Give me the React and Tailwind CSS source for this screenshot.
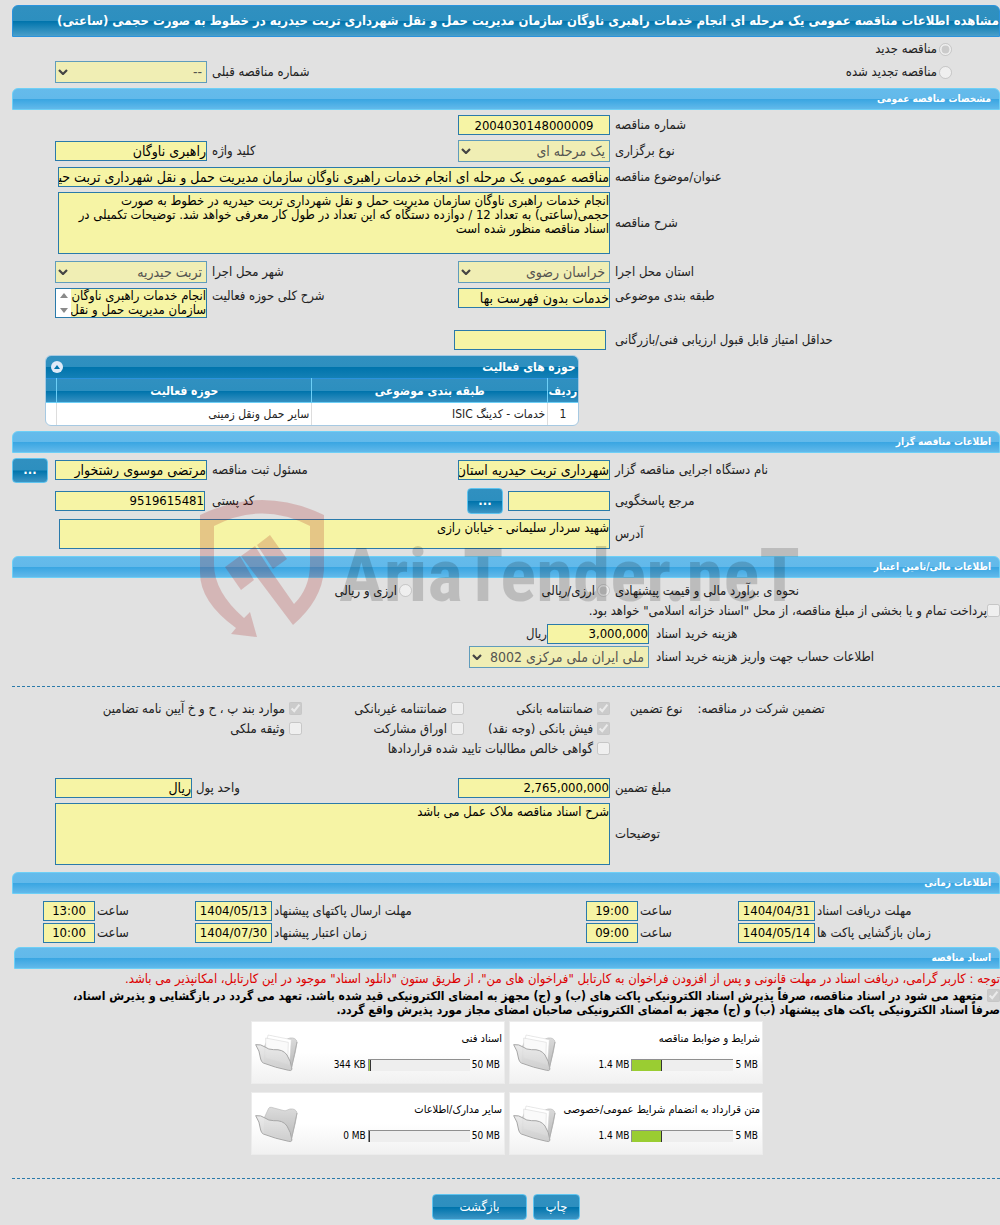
const title =
  "مناقصه عمومی یک مرحله ای انجام خدمات راهبری ناوگان سازمان مدیریت حمل و نقل شهرداری تربت حیدریه در خطوط به صورت حجمی (ساعتی)";

const description =
  "انجام خدمات راهبری ناوگان سازمان مدیریت حمل و نقل شهرداری تربت حیدریه در خطوط به صورت\nحجمی(ساعتی) به تعداد 12 / دوازده دستگاه که این تعداد در طول کار معرفی خواهد شد. توضیحات تکمیلی در\nاسناد مناقصه منظور شده است";

const guarantees = [
  { id: "g1", label: "ضمانتنامه بانکی", checked: true },
  { id: "g2", label: "ضمانتنامه غیربانکی", checked: false },
  { id: "g3", label: "موارد بند پ ، ح و خ آیین نامه تضامین", checked: true },
  { id: "g4", label: "فیش بانکی (وجه نقد)", checked: true },
  { id: "g5", label: "اوراق مشارکت", checked: false },
  { id: "g6", label: "وثیقه ملکی", checked: false },
  { id: "g7", label: "گواهی خالص مطالبات تایید شده قراردادها", checked: false, wide: true },
];

const times = [
  [
    { id: "t1", label: "مهلت دریافت اسناد", date: "1404/04/31", hour: "19:00" },
    { id: "t2", label: "مهلت ارسال پاکتهای پیشنهاد", date: "1404/05/13", hour: "13:00" },
  ],
  [
    { id: "t3", label: "زمان بازگشایی پاکت ها", date: "1404/05/14", hour: "09:00" },
    { id: "t4", label: "زمان اعتبار پیشنهاد", date: "1404/07/30", hour: "10:00" },
  ],
];

const documents = [
  { title: "شرایط و ضوابط مناقصه", used: "1.4 MB", max: "5 MB", percent: 29, papers: true },
  { title: "اسناد فنی", used: "344 KB", max: "50 MB", percent: 2, papers: true },
  { title: "متن قرارداد به انضمام شرایط عمومی/خصوصی", used: "1.4 MB", max: "5 MB", percent: 29, papers: true },
  { title: "سایر مدارک/اطلاعات", used: "0 MB", max: "50 MB", percent: 0, papers: false },
];

const Section = ({ children, className = "mt-[7px]" }) => (
  <h2
    className={`flex h-[22px] items-center rounded-t-md border border-[#6dcff6] bg-[linear-gradient(#65bbeb_0%,#62b9ea_48%,#3aa6e2_52%,#62b9ea_100%)] px-2 text-[10px] font-bold text-white ${className}`}
  >
    {children}
  </h2>
);

const Row = ({ children, className = "items-center" }) => (
  <div className={`grid grid-cols-[390fr_152fr_251fr_152fr_43fr] ${className}`}>{children}</div>
);

const Label = ({ htmlFor, children, className = "pl-[5px]" }) => (
  <label htmlFor={htmlFor} className={`block text-left whitespace-nowrap ${className}`}>
    {children}
  </label>
);

const Input = ({ id, value, className = "w-full text-[14px]" }) => (
  <input
    id={id}
    type="text"
    readOnly
    defaultValue={value}
    className={`block h-5 min-w-0 border border-[#2a7aaa] bg-[#f6f4a5] leading-[18px] text-black outline-none ${className}`}
  />
);

const Area = ({ id, value, className }) => (
  <textarea
    id={id}
    readOnly
    defaultValue={value}
    className={`block w-full resize-none overflow-hidden border border-[#2a7aaa] bg-[#f6f4a5] pt-px leading-[14px] text-black outline-none ${className}`}
  />
);

const Select = ({ id, value, className = "w-full" }) => (
  <div className={`relative ${className}`}>
    <select
      id={id}
      disabled
      className="block h-[22px] w-full appearance-none border border-[#609cbb] bg-[#f0eeb4] pr-1 pl-4 text-[14px] text-[#545450]"
    >
      <option>{value}</option>
    </select>
    <svg viewBox="0 0 10 6" className="pointer-events-none absolute top-2 left-[3px] h-1.5 w-2.5">
      <path d="M1 1l4 4 4-4" fill="none" stroke="#444" strokeWidth="2.2" />
    </svg>
  </div>
);

const Choice = ({ type = "checkbox", id, name, checked, label, gap = "mr-1", className = "" }) => (
  <div className={`flex items-center ${className}`}>
    <input id={id} name={name} type={type} defaultChecked={checked} disabled className="m-0 h-[13px] w-[13px] shrink-0" />
    <label htmlFor={id} className={`whitespace-nowrap ${gap}`}>
      {label}
    </label>
  </div>
);

const Button = ({ children, className, label }) => (
  <button
    type="button"
    aria-label={label}
    className={`rounded border border-[#5fc4ef] bg-[linear-gradient(#3090c0_0%,#2d8fbf_48%,#0074ac_52%,#3d95c4_100%)] text-white ${className}`}
  >
    {children}
  </button>
);

const FolderIcon = ({ papers }) => (
  <svg viewBox="10 45 135 120" className="h-10 w-[45px]" aria-hidden="true">
    <defs>
      <linearGradient id="folderBack" x1="0" y1="0" x2="0" y2="1">
        <stop offset="0" stopColor="#dcdcdc" />
        <stop offset="1" stopColor="#b8b8b8" />
      </linearGradient>
      <linearGradient id="folderFront" x1="0" y1="0" x2="0" y2="1">
        <stop offset="0" stopColor="#e9e9e9" />
        <stop offset="1" stopColor="#cfcfcf" />
      </linearGradient>
    </defs>
    <path
      d="M42 84L54 58q2-4 8-3l38 10q6 1 10-2l8-3q18-2 21 12l-5 30-12 48q-2 6-8 4L40 132z"
      fill="url(#folderBack)"
      stroke="#b9b9b9"
      strokeWidth="2"
    />
    {papers && (
      <g stroke="#d2d2d2" strokeWidth="1.5">
        <path d="M52 51l70 14-6 76-74-30z" fill="#fff" />
        <path d="M45 60l68 13-2 66-66-20z" fill="#fafafa" />
      </g>
    )}
    <path
      d="M15 80q16-2 28 7 10 8 26 8 28-2 40 16 12 18 15 43-2 5-10 3-40-8-76-22-6-3-8-12-3-26-15-43z"
      fill="url(#folderFront)"
      fillOpacity="0.92"
      stroke="#a6a6a6"
      strokeWidth="3"
    />
    <path d="M122 152l9-42 8-38" fill="none" stroke="#b0b0b0" strokeWidth="3" />
  </svg>
);

const Watermark = () => (
  <svg
    viewBox="0 0 620 140"
    className="pointer-events-none absolute top-[498px] left-[20%] z-10 w-[62%]"
    direction="ltr"
    aria-hidden="true"
  >
    <g fill="#a00000" fillOpacity="0.19">
      <path d="M0 17Q62-13 124 17V72Q122 102 93 127L41 58 55 48 71 73 94 106Q110 90 110 66V28Q62 3 14 28V66Q14 94 44 120L50 114 57 139 31 136 36 130Q0 104 0 75z" />
      <path d="M25 69l15-11 14 24-13 10z" />
      <path d="M57 47l13-10 17 24-14 10z" />
    </g>
    <text
      x="139"
      y="103"
      fill="#000"
      fillOpacity="0.16"
      fontSize="75"
      className="font-['Roboto_Condensed',Roboto,sans-serif] font-bold"
    >
      AriaTender.neT
    </text>
  </svg>
);

const DocumentCard = ({ title, used, max, percent, papers }) => (
  <div className="relative flex h-[63px] items-center border border-[#ececec] bg-linear-to-b from-white from-50% to-[#f1f1f1] px-0.5 text-[11px] text-black">
    <div className="flex-1">
      <p className="text-right leading-4 whitespace-nowrap">{title}</p>
      <div dir="ltr" className="mt-2.5 flex items-center justify-end gap-0.5 pr-0.5 text-[10px] leading-4">
        <span>{used}</span>
        <div className="h-3 w-[102px] border-t border-l border-[#8f8f8f] bg-[#eee]">
          <div className="h-full border-r border-[#333] bg-[#9acd32]" style={{ width: `${percent}%` }} />
        </div>
        <span>{max}</span>
      </div>
    </div>
    <div className="absolute top-[11px] left-0.5">
      <FolderIcon papers={papers} />
    </div>
  </div>
);

export default function App() {
  return (
    <div
      dir="rtl"
      className="relative min-h-screen overflow-hidden bg-[#e1e1e1] pt-[5px] pb-[5px] pl-3 font-['DejaVu_Sans_Condensed','DejaVu_Sans',sans-serif] text-[13px] leading-4 text-[#222]"
    >
      <Watermark />

      <h1 className="flex h-8 items-center rounded-t-md border border-[#2b93dd] bg-[linear-gradient(#3090c0_0%,#2d8fbf_49%,#0074ac_51%,#4a9fca_100%)] font-bold whitespace-nowrap text-white">
        مشاهده اطلاعات {title}
      </h1>

      <Row className="mt-0.5 h-5 items-center">
        <Choice type="radio" id="new" name="kind" checked label="مناقصه جدید" gap="mr-0.5" className="pr-12" />
      </Row>
      <Row className="mt-0.5 items-center">
        <Choice type="radio" id="renewed" name="kind" label="مناقصه تجدید شده" gap="mr-0.5" className="pr-12" />
        <span />
        <Label htmlFor="prev">شماره مناقصه قبلی</Label>
        <Select id="prev" value="--" />
      </Row>

      <Section className="mt-[5px]">مشخصات مناقصه عمومی</Section>
      <div className="mt-[5px] space-y-[5px]">
        <Row>
          <Label htmlFor="number">شماره مناقصه</Label>
          <Input id="number" value="2004030148000009" className="w-full text-center" />
        </Row>
        <Row>
          <Label htmlFor="holding">نوع برگزاری</Label>
          <Select id="holding" value="یک مرحله ای" />
          <Label htmlFor="keyword">کلید واژه</Label>
          <Input id="keyword" value="راهبری ناوگان" />
        </Row>
        <Row>
          <Label htmlFor="subject">عنوان/موضوع مناقصه</Label>
          <div className="col-span-3 pl-[3px]">
            <Input id="subject" value={title} />
          </div>
        </Row>
        <Row>
          <Label htmlFor="desc">شرح مناقصه</Label>
          <div className="col-span-3 pl-[3px]">
            <Area id="desc" value={description} className="h-[62px] whitespace-pre" />
          </div>
        </Row>
      </div>

      <Row className="mt-[7px] items-center">
        <Label htmlFor="province">استان محل اجرا</Label>
        <Select id="province" value="خراسان رضوی" />
        <Label htmlFor="city">شهر محل اجرا</Label>
        <Select id="city" value="تربت حیدریه" />
      </Row>
      <Row className="mt-[5px] items-start">
        <Label htmlFor="category">طبقه بندی موضوعی</Label>
        <Input id="category" value="خدمات بدون فهرست بها" />
        <Label htmlFor="scope">شرح کلی حوزه فعالیت</Label>
        <div className="flex border border-[#2a7aaa]">
          <textarea
            id="scope"
            readOnly
            defaultValue={"انجام خدمات راهبری ناوگان\nسازمان مدیریت حمل و نقل"}
            className="block h-7 min-w-0 flex-1 resize-none overflow-hidden bg-[#f6f4a5] leading-[14px] whitespace-pre text-black outline-none"
          />
          <div className="flex w-[15px] flex-col items-center justify-between bg-white py-1">
            <svg viewBox="0 0 8 5" className="h-[5px] w-2">
              <path d="M0 5l4-5 4 5z" fill="#8a8a8a" />
            </svg>
            <svg viewBox="0 0 8 5" className="h-[5px] w-2">
              <path d="M0 0l4 5 4-5z" fill="#8a8a8a" />
            </svg>
          </div>
        </div>
      </Row>
      <Row className="mt-3 items-center">
        <Label htmlFor="score">حداقل امتیاز قابل قبول ارزیابی فنی/بازرگانی</Label>
        <Input id="score" className="mr-1 w-full" />
      </Row>

      {/* Activity table */}
      <div className="mt-[5px] mr-auto ml-[33px] w-[54%] overflow-hidden rounded-md border border-[#a6c9e2] bg-white">
        <div className="flex h-[22px] items-center justify-between bg-[linear-gradient(#3090c0_0%,#2d8fbf_48%,#0074ac_52%,#1480b6_100%)] pr-0.5 pl-[5px] text-[12px] font-bold text-white">
          <span>حوزه های فعالیت</span>
          <button type="button" aria-label="بستن" className="flex h-3 w-3 items-center justify-center rounded-full bg-[#dfeaf8]">
            <svg viewBox="0 0 6 4" className="h-1 w-1.5">
              <path d="M0 4l3-4 3 4z" fill="#0074ac" />
            </svg>
          </button>
        </div>
        <table className="w-full table-fixed border-collapse text-[12px]">
          <thead>
            <tr className="h-6 border-t border-b border-t-[#2b93dd] border-b-[#6dcff6] bg-[linear-gradient(#3090c0_0%,#2d8fbf_48%,#0074ac_52%,#3590c1_100%)] text-white">
              <th className="w-[5.6%] whitespace-nowrap">ردیف</th>
              <th className="w-[44.4%] border-x border-[#6dcff6]">طبقه بندی موضوعی</th>
              <th className="w-[48%] border-x border-[#6dcff6]">حوزه فعالیت</th>
              <th className="w-[2%]" />
            </tr>
          </thead>
          <tbody>
            <tr className="h-[22px]">
              <td className="text-center">1</td>
              <td className="border-x border-[#ddd] pr-0.5">خدمات - کدینگ ISIC</td>
              <td className="border-x border-[#ddd] pr-0.5">سایر حمل ونقل زمینی</td>
              <td />
            </tr>
          </tbody>
        </table>
      </div>

      <Section className="mt-[5px]">اطلاعات مناقصه گزار</Section>
      <div className="mt-[5px] space-y-[5px]">
        <Row>
          <Label htmlFor="agency">نام دستگاه اجرایی مناقصه گزار</Label>
          <Input id="agency" value="شهرداری تربت حیدریه استان خراسان رضوی" />
          <Label htmlFor="owner">مسئول ثبت مناقصه</Label>
          <Input id="owner" value="مرتضی موسوی رشتخوار" />
          <Button label="جزئیات مسئول" className="mr-auto h-[25px] w-9 font-bold">
            ...
          </Button>
        </Row>
        <Row>
          <Label htmlFor="contact">مرجع پاسخگویی</Label>
          <div className="flex items-center gap-[5px]">
            <Input id="contact" className="w-[102px] shrink-0" />
            <Button label="انتخاب مرجع" className="h-[26px] w-9 shrink-0 font-bold">
              ...
            </Button>
          </div>
          <Label htmlFor="postal">کد پستی</Label>
          <div className="pr-0.5">
            <Input id="postal" value="9519615481" className="w-full" />
          </div>
        </Row>
        <Row>
          <Label htmlFor="address">آدرس</Label>
          <div className="col-span-3 pl-1">
            <Area id="address" value="شهید سردار سلیمانی - خیابان رازی" className="h-[30px]" />
          </div>
        </Row>
      </div>

      <Section>اطلاعات مالی/تامین اعتبار</Section>
      <Row className="mt-[3px] h-5 items-center">
        <p className="pl-[5px] text-left">نحوه ی برآورد مالی و قیمت پیشنهادی</p>
        <div className="col-span-3 flex">
          <Choice type="radio" id="rial" name="currency" checked label="ارزی/ریالی" gap="mr-0.5" className="w-[198px]" />
          <Choice type="radio" id="both" name="currency" label="ارزی و ریالی" gap="mr-0.5" />
        </div>
      </Row>
      <Choice
        id="treasury"
        label={'پرداخت تمام و یا بخشی از مبلغ مناقصه، از محل "اسناد خزانه اسلامی" خواهد بود.'}
        gap="mr-0"
        className="h-5"
      />
      <div className="mt-[3px] grid grid-cols-[351fr_180fr_457fr] items-center gap-y-0.5">
        <Label htmlFor="fee" className="pl-[7px]">
          هزینه خرید اسناد
        </Label>
        <div className="col-span-2 flex items-center">
          <Input id="fee" value="3,000,000" className="w-[102px]" />
          <span>ریال</span>
        </div>
        <Label htmlFor="account" className="pl-[7px]">
          اطلاعات حساب جهت واریز هزینه خرید اسناد
        </Label>
        <Select id="account" value="ملی ایران ملی مرکزی 8002" />
      </div>

      <hr className="mt-[18px] border-t border-dashed border-[#2a7aaa]" />

      <div className="mt-3 grid grid-cols-[390fr_598fr]">
        <div className="flex h-5 items-center justify-end gap-[15px] pl-5">
          <span>تضمین شرکت در مناقصه:</span>
          <span>نوع تضمین</span>
        </div>
        <div className="grid grid-cols-[146fr_162fr_290fr]">
          {guarantees.map(({ wide, ...g }) => (
            <Choice key={g.id} {...g} className={wide ? "col-span-2 h-5" : "h-5"} />
          ))}
        </div>
      </div>

      <Row className="mt-[19px] items-center">
        <Label htmlFor="amount">مبلغ تضمین</Label>
        <Input id="amount" value="2,765,000,000" className="w-full" />
        <Label htmlFor="unit" className="-ml-[15px] pl-1">
          واحد پول
        </Label>
        <div className="pr-[15px]">
          <Input id="unit" value="ریال" />
        </div>
      </Row>
      <Row className="mt-[5px] items-center">
        <Label htmlFor="notes">توضیحات</Label>
        <div className="col-span-3">
          <Area id="notes" value="شرح اسناد مناقصه ملاک عمل می باشد" className="h-[62px]" />
        </div>
      </Row>

      <Section>اطلاعات زمانی</Section>
      <div className="mt-[7px] space-y-0.5">
        {times.map((pair) => (
          <div
            key={pair[0].id}
            className="grid grid-cols-[185fr_77fr_100fr_52fr_314fr_77fr_100fr_52fr_31fr] items-center"
          >
            {pair.map((t) => (
              <div key={t.id} className="contents">
                <Label htmlFor={t.id} className="pl-0.5">
                  {t.label}
                </Label>
                <Input id={t.id} value={t.date} className="w-full text-center" />
                <Label htmlFor={`${t.id}h`} className="pl-0.5">
                  ساعت
                </Label>
                <Input id={`${t.id}h`} value={t.hour} className="w-full text-center" />
              </div>
            ))}
          </div>
        ))}
      </div>

      <Section className="mt-1 ml-0.5">اسناد مناقصه</Section>
      <p className="mt-0.5 whitespace-nowrap text-[#dd0000]">
        توجه : کاربر گرامی، دریافت اسناد در مهلت قانونی و پس از افزودن فراخوان به کارتابل "فراخوان های من"، از طریق ستون "دانلود اسناد" موجود در این کارتابل، امکانپذیر می باشد.
      </p>
      <div className="mt-0.5 text-[12px] leading-[14px] font-bold text-black">
        <input id="commit" type="checkbox" defaultChecked disabled className="m-0 h-[13px] w-[13px] align-top" />
        <label htmlFor="commit" className="mr-1">
          متعهد می شود در اسناد مناقصه، صرفاً پذیرش اسناد الکترونیکی پاکت های (ب) و (ج) مجهز به امضای الکترونیکی قید شده باشد. تعهد می گردد در بازگشایی و پذیرش اسناد،
          <br />
          صرفاً اسناد الکترونیکی پاکت های پیشنهاد (ب) و (ج) مجهز به امضای الکترونیکی صاحبان امضای مجاز مورد پذیرش واقع گردد.
        </label>
      </div>

      <div className="mt-1 mr-[237px] grid w-[512px] grid-cols-2 gap-x-1 gap-y-2">
        {documents.map((doc) => (
          <DocumentCard key={doc.title} {...doc} />
        ))}
      </div>

      <hr className="mt-[23px] border-t border-dashed border-[#2a7aaa]" />
      <div className="mt-[15px] flex justify-center gap-1.5">
        <Button className="h-[26px] w-[47px]">چاپ</Button>
        <Button className="h-[26px] w-[95px]">بازگشت</Button>
      </div>
    </div>
  );
}
